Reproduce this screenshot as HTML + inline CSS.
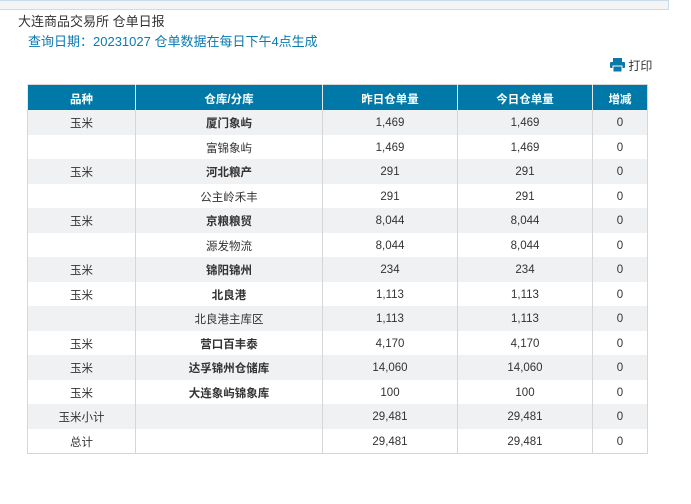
<!DOCTYPE html>
<html><head><meta charset="utf-8"><style>
body{margin:0;width:691px;height:504px;background:#fff;font-family:"Liberation Sans","Noto Sans CJK SC",sans-serif;position:relative;overflow:hidden}
.band{position:absolute;left:0;top:0;width:668px;height:8px;background:#f4f4f4;border-top:1px solid #c8dcec;border-bottom:1px solid #c8dcec;border-right:1px solid #c8dcec}
.t1{position:absolute;left:18px;top:11px;font-size:13px;color:#333}
.t2{position:absolute;left:28px;top:31px;font-size:13px;color:#0a7ab0}
.pr{position:absolute;left:610px;top:57px;font-size:12px;color:#333}
table{position:absolute;left:27px;top:84px;border-collapse:collapse;font-size:11.5px;color:#333;border:1px solid #d6d6d6}
th{background:#0079a8;color:#fff;font-weight:bold;height:23px;padding:2px 0 0 0;border-left:1px solid #e8e8e8}
td{height:22.5px;padding:2px 0 0 0;text-align:center;border-left:1px solid #d6d6d6}
tr:nth-child(even) td{background:#f0f1f3}
.b{font-weight:bold}
</style></head><body>
<div class="band"></div>
<div class="t1">大连商品交易所 仓单日报</div>
<div class="t2">查询日期：20231027 仓单数据在每日下午4点生成</div>
<div class="pr"><svg width="15" height="15" viewBox="0 0 15 15" style="vertical-align:-3px"><rect x="3" y="0" width="9" height="4" fill="#0a78a8"/><rect x="0" y="4" width="15" height="6" rx="1" fill="#0a78a8"/><rect x="3" y="8" width="9" height="6" fill="#0a78a8" stroke="#fff" stroke-width="1"/></svg> 打印</div>
<table>
<tr><th style="width:107px">品种</th><th style="width:186px">仓库/分库</th><th style="width:134px">昨日仓单量</th><th style="width:134px">今日仓单量</th><th style="width:54px">增减</th></tr>
<tr><td>玉米</td><td class="b">厦门象屿</td><td>1,469</td><td>1,469</td><td>0</td></tr>
<tr><td></td><td>富锦象屿</td><td>1,469</td><td>1,469</td><td>0</td></tr>
<tr><td>玉米</td><td class="b">河北粮产</td><td>291</td><td>291</td><td>0</td></tr>
<tr><td></td><td>公主岭禾丰</td><td>291</td><td>291</td><td>0</td></tr>
<tr><td>玉米</td><td class="b">京粮粮贸</td><td>8,044</td><td>8,044</td><td>0</td></tr>
<tr><td></td><td>源发物流</td><td>8,044</td><td>8,044</td><td>0</td></tr>
<tr><td>玉米</td><td class="b">锦阳锦州</td><td>234</td><td>234</td><td>0</td></tr>
<tr><td>玉米</td><td class="b">北良港</td><td>1,113</td><td>1,113</td><td>0</td></tr>
<tr><td></td><td>北良港主库区</td><td>1,113</td><td>1,113</td><td>0</td></tr>
<tr><td>玉米</td><td class="b">营口百丰泰</td><td>4,170</td><td>4,170</td><td>0</td></tr>
<tr><td>玉米</td><td class="b">达孚锦州仓储库</td><td>14,060</td><td>14,060</td><td>0</td></tr>
<tr><td>玉米</td><td class="b">大连象屿锦象库</td><td>100</td><td>100</td><td>0</td></tr>
<tr><td>玉米小计</td><td></td><td>29,481</td><td>29,481</td><td>0</td></tr>
<tr><td>总计</td><td></td><td>29,481</td><td>29,481</td><td>0</td></tr>
</table>
</body></html>
